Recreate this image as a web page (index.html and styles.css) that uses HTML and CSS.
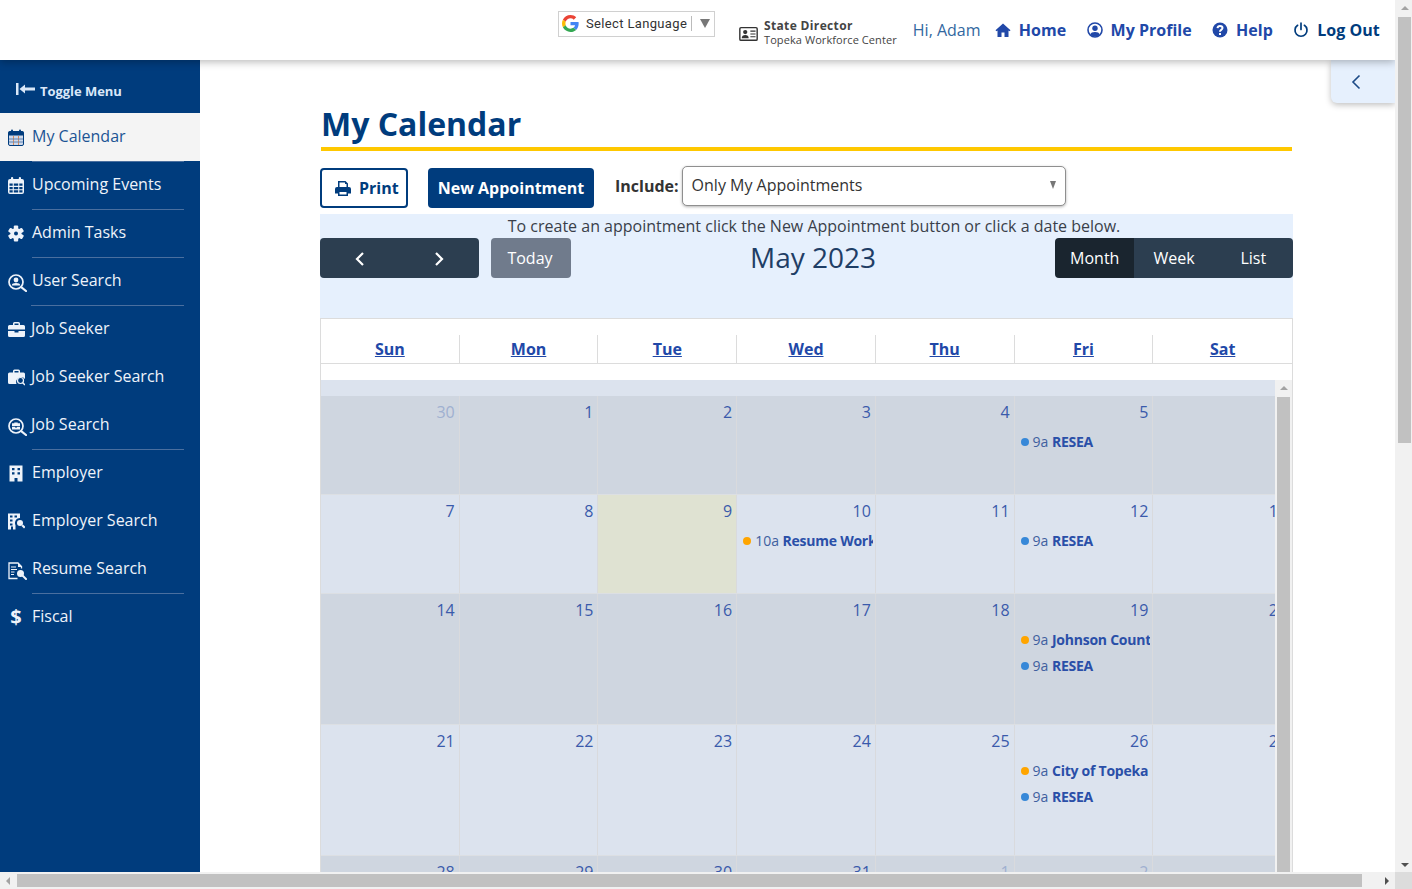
FILE: index.html
```html
<!DOCTYPE html>
<html lang="en">
<head>
<meta charset="utf-8">
<title>My Calendar</title>
<link rel="stylesheet" href="styles.css">
</head>
<body>
<div class="viewport">
  <div class="page">
    <header class="topbar">
      <div class="translate">
        <svg class="g-logo" viewBox="0 0 48 48" aria-hidden="true"><path fill="#EA4335" d="M24 9.500c3.500 0 6.700 1.200 9.200 3.600l6.900-6.900C35.900 2.400 30.500 0 24 0 14.600 0 6.500 5.400 2.600 13.200l8 6.200C12.500 13.700 17.800 9.500 24 9.500z"/><path fill="#4285F4" d="M47 24.500c0-1.600-.2-3.100-.4-4.500H24v9h12.900c-.6 3-2.300 5.500-4.800 7.200l7.700 6C44.300 38 47 31.800 47 24.500z"/><path fill="#FBBC05" d="M10.500 28.600c-.5-1.400-.8-3-.8-4.600s.3-3.200.8-4.600l-8-6.200C.9 16.500 0 20.100 0 24s.9 7.500 2.600 10.800l7.900-6.200z"/><path fill="#34A853" d="M24 48c6.500 0 11.900-2.100 15.900-5.800l-7.700-6c-2.200 1.400-4.900 2.300-8.200 2.300-6.200 0-11.500-4.200-13.400-9.900l-8 6.200C6.500 42.600 14.600 48 24 48z"/></svg>
        <span class="translate-label">Select Language</span>
        <span class="translate-caret"></span>
      </div>
      <div class="role">
        <svg class="role-icon" viewBox="0 0 20 16" aria-hidden="true"><path fill="#333" fill-rule="evenodd" d="M2 1h16a2 2 0 0 1 2 2v11a2 2 0 0 1-2 2H2a2 2 0 0 1-2-2V3a2 2 0 0 1 2-2zm0 1.500a.5.500 0 0 0-.5.500v11a.5.500 0 0 0 .5.500h16a.5.500 0 0 0 .5-.5V3a.5.500 0 0 0-.5-.5z"/><circle cx="6.500" cy="6.500" r="2.300" fill="#333"/><path fill="#333" d="M2.800 13c0-2.500 1.500-3.500 3.700-3.500s3.700 1 3.700 3.500z"/><path stroke="#333" stroke-width="1.200" d="M12 5.500h5.500M12 8.500h5.500M12 11.500h5.500"/></svg>
        <div class="role-text">
          <div class="role-title">State Director</div>
          <div class="role-place">Topeka Workforce Center</div>
        </div>
      </div>
      <nav class="top-nav">
        <span class="greet">Hi, Adam</span>
        <a class="top-link">
          <svg class="top-icon" viewBox="0 0 16 16" aria-hidden="true"><path fill="currentColor" d="M8 1.500 0.500 8.200l1 1.100L2.500 8.500V15h4v-4.500h3V15h4V8.500l1 .8 1-1.100z"/></svg>
          Home
        </a>
        <a class="top-link">
          <svg class="top-icon" viewBox="0 0 16 16" aria-hidden="true"><circle cx="8" cy="8" r="7" fill="none" stroke="currentColor" stroke-width="1.600"/><circle cx="8" cy="6.300" r="2.700" fill="currentColor"/><path fill="currentColor" d="M3.200 12.600C3.800 10.800 5.500 10 8 10s4.200.8 4.800 2.600C11.500 14 9.800 14.600 8 14.600s-3.500-.6-4.800-2z"/></svg>
          My Profile
        </a>
        <a class="top-link">
          <svg class="top-icon" viewBox="0 0 16 16" aria-hidden="true"><circle cx="8" cy="8" r="7.500" fill="currentColor"/><path fill="none" stroke="#fff" stroke-width="2" d="M5.500 6.200C5.700 4.800 6.700 4 8 4c1.400 0 2.500.9 2.500 2.100 0 1.800-2.500 1.700-2.500 3.400v.2"/><rect x="7" y="11" width="2" height="2" fill="#fff"/></svg>
          Help
        </a>
        <a class="top-link top-link-dark">
          <svg class="top-icon" viewBox="0 0 16 16" aria-hidden="true"><path fill="none" stroke="currentColor" stroke-width="1.700" stroke-linecap="round" d="M8 1.200v6.300M4.600 3.300a6 6 0 1 0 6.800 0"/></svg>
          Log Out
        </a>
      </nav>
    </header>

    <div class="shell">
      <aside class="sidebar">
        <div class="toggle">
          <svg class="toggle-icon" viewBox="0 0 19 12" aria-hidden="true"><path fill="currentColor" d="M0 0h2.500v12H0zM3.500 6 9 1.500v3h10v3H9v3z"/></svg>
          Toggle Menu
        </div>
        <a class="nav-item is-active">
          <svg class="nav-icon" viewBox="0 0 16 17" aria-hidden="true"><rect x="0.500" y="2.500" width="15" height="14" rx="1.500" fill="#cfd9ea" stroke="#003c7d"/><rect x="0.500" y="2.500" width="15" height="4" fill="#003c7d"/><path stroke="#d98b5a" d="M5.500 7v9M10.500 7v9"/><path stroke="#5f84b5" d="M1 10h14M1 13h14"/><rect x="3" y="0.500" width="2" height="4" rx="1" fill="#003c7d"/><rect x="11" y="0.500" width="2" height="4" rx="1" fill="#003c7d"/></svg>
          <span class="nav-label">My Calendar</span>
        </a>
        <a class="nav-item sep">
          <svg class="nav-icon" viewBox="0 0 16 17" aria-hidden="true"><path fill="currentColor" fill-rule="evenodd" d="M2 2h12a2 2 0 0 1 2 2v11a2 2 0 0 1-2 2H2a2 2 0 0 1-2-2V4a2 2 0 0 1 2-2zM1.500 6.500v2.300h3.200V6.500zm4.300 0v2.300h4.400V6.500zm5.500 0v2.300h3.200V6.500zm-9.800 3.400v2.300h3.200V9.900zm4.300 0v2.300h4.400V9.900zm5.500 0v2.300h3.200V9.900zM1.500 13.300v2.200h3.200v-2.200zm4.300 0v2.200h4.400v-2.200zm5.500 0v2.200h3.200v-2.200z"/><rect x="3" y="0" width="2.200" height="4" rx="1" fill="currentColor"/><rect x="10.800" y="0" width="2.200" height="4" rx="1" fill="currentColor"/></svg>
          <span class="nav-label">Upcoming Events</span>
        </a>
        <a class="nav-item sep">
          <svg class="nav-icon" viewBox="0 0 16 16" aria-hidden="true"><g fill="currentColor"><rect x="5.800" y="0" width="4.400" height="16" rx="1"/><rect x="5.800" y="0" width="4.400" height="16" rx="1" transform="rotate(60 8 8)"/><rect x="5.800" y="0" width="4.400" height="16" rx="1" transform="rotate(120 8 8)"/></g><circle cx="8" cy="8" r="5.500" fill="currentColor"/><circle cx="8" cy="8" r="2" fill="#003c7d"/></svg>
          <span class="nav-label">Admin Tasks</span>
        </a>
        <a class="nav-item sep">
          <svg class="nav-icon nav-icon-lg" viewBox="0 0 19 18" aria-hidden="true"><circle cx="8" cy="8" r="7" fill="none" stroke="currentColor" stroke-width="1.700"/><circle cx="8" cy="6" r="2.400" fill="currentColor"/><path fill="currentColor" d="M3.800 11.500c0-1.600 1.800-2.400 4.200-2.400s4.200.8 4.200 2.400z"/><path stroke="currentColor" stroke-width="2.200" stroke-linecap="round" d="M13.200 13.200 18 17"/></svg>
          <span class="nav-label">User Search</span>
        </a>
        <a class="nav-item sep">
          <svg class="nav-icon nav-icon-wide" viewBox="0 0 17 15" aria-hidden="true"><path fill="currentColor" d="M5 3V1.500A1.500 1.500 0 0 1 6.500 0h4A1.500 1.500 0 0 1 12 1.500V3h3.500A1.500 1.500 0 0 1 17 4.500V7.500H0V4.500A1.500 1.500 0 0 1 1.500 3zM6.500 3h4V1.500h-4zM0 9h6.500v1.500h4V9H17v4.500a1.500 1.500 0 0 1-1.500 1.500h-14A1.500 1.500 0 0 1 0 13.500z"/></svg>
          <span class="nav-label nav-label-tight">Job Seeker</span>
        </a>
        <a class="nav-item">
          <svg class="nav-icon nav-icon-wide" viewBox="0 0 17 16" aria-hidden="true"><path fill="currentColor" d="M5 3V1.500A1.500 1.500 0 0 1 6.500 0h4A1.500 1.500 0 0 1 12 1.500V3h3.500A1.500 1.500 0 0 1 17 4.500V9.500a5 5 0 0 0-8.500 5H1.500A1.500 1.500 0 0 1 0 13V4.500A1.500 1.500 0 0 1 1.500 3zM6.500 3h4V1.500h-4z"/><circle cx="12.500" cy="11" r="3" fill="none" stroke="currentColor" stroke-width="1.200"/><path stroke="currentColor" stroke-width="1.500" d="m14.700 13.200 2.300 2.300"/></svg>
          <span class="nav-label nav-label-tight">Job Seeker Search</span>
        </a>
        <a class="nav-item">
          <svg class="nav-icon nav-icon-lg" viewBox="0 0 19 18" aria-hidden="true"><circle cx="8" cy="8" r="7" fill="none" stroke="currentColor" stroke-width="1.700"/><path fill="currentColor" d="M6.300 5.300V4.500h3.400v.8h2.300v2.700H4V5.300zM4 8.800h3.300v.9h1.400v-.9H12v2.700H4z"/><path stroke="currentColor" stroke-width="2.200" stroke-linecap="round" d="M13.200 13.200 18 17"/></svg>
          <span class="nav-label nav-label-tight">Job Search</span>
        </a>
        <a class="nav-item sep">
          <svg class="nav-icon" viewBox="0 0 16 16" aria-hidden="true"><path fill="currentColor" fill-rule="evenodd" d="M1.500 0h13v16H9.500v-3.500h-3V16h-5zM4 2.500v2.200h2.500V2.500zm5.500 0v2.200H12V2.500zM4 6.700v2.200h2.500V6.700zm5.500 0v2.200H12V6.700z"/></svg>
          <span class="nav-label">Employer</span>
        </a>
        <a class="nav-item">
          <svg class="nav-icon nav-icon-wide" viewBox="0 0 17 16" aria-hidden="true"><path fill="currentColor" fill-rule="evenodd" d="M0 0h12v4.500a5 5 0 0 0-4.500 7.200V16H5v-3H3v3H0zM2 2v2h2.500V2zm4.500 0v2H9V2zM2 6v2h2.500V6zM2 10v2h2.500v-2z"/><circle cx="12" cy="9.500" r="3" fill="currentColor"/><path stroke="currentColor" stroke-width="2" d="m14.200 11.700 2.500 2.500"/></svg>
          <span class="nav-label">Employer Search</span>
        </a>
        <a class="nav-item">
          <svg class="nav-icon nav-icon-lg" viewBox="0 0 19 18" aria-hidden="true"><path fill="none" stroke="currentColor" stroke-width="1.300" d="M9.500 16.500H1V1h9l3.500 3.500v2"/><path fill="currentColor" d="M10 1v4h4z"/><path stroke="currentColor" d="M3 5h5M3 7.500h6M3 10h3.500M3 12.500h3"/><circle cx="12.500" cy="11.500" r="3.500" fill="currentColor"/><path stroke="currentColor" stroke-width="2" stroke-linecap="round" d="m15 14 3 3"/></svg>
          <span class="nav-label">Resume Search</span>
        </a>
        <a class="nav-item sep">
          <span class="nav-glyph">$</span>
          <span class="nav-label">Fiscal</span>
        </a>
      </aside>

      <main class="content">
        <h1 class="page-title">My Calendar</h1>
        <div class="actions">
          <button class="btn btn-outline">
            <svg class="print-icon" viewBox="0 0 16 15" aria-hidden="true"><path fill="currentColor" fill-rule="evenodd" d="M3 0h7.500L13 2.500V6h1a2 2 0 0 1 2 2v4.500h-3V15H3v-2.500H0V8a2 2 0 0 1 2-2h1zM4.500 1.500V6h7V3h-1.500V1.500zM4.500 11v2.500h7V11z"/></svg>
            Print
          </button>
          <button class="btn btn-solid">New Appointment</button>
          <label class="include-label">Include:</label>
          <div class="select">
            <span>Only My Appointments</span>
            <span class="select-caret"></span>
          </div>
        </div>

        <section class="fc-head">
          <p class="hint">To create an appointment click the New Appointment button or click a date below.</p>
          <div class="fc-toolbar">
            <div class="fc-left">
              <div class="btn-group">
                <button class="fc-btn fc-arrow"><svg class="chev" viewBox="0 0 10 16" aria-hidden="true"><path fill="none" stroke="currentColor" stroke-width="2.200" d="M8 2 2 8l6 6"/></svg></button>
                <button class="fc-btn fc-arrow"><svg class="chev" viewBox="0 0 10 16" aria-hidden="true"><path fill="none" stroke="currentColor" stroke-width="2.200" d="m2 2 6 6-6 6"/></svg></button>
              </div>
              <button class="fc-btn fc-today">Today</button>
            </div>
            <h2 class="fc-title">May 2023</h2>
            <div class="btn-group">
              <button class="fc-btn fc-view is-on">Month</button>
              <button class="fc-btn fc-view">Week</button>
              <button class="fc-btn fc-view">List</button>
            </div>
          </div>
        </section>

        <section class="cal">
          <div class="dow-row">
            <div class="dow"><a>Sun</a></div>
            <div class="dow"><a>Mon</a></div>
            <div class="dow"><a>Tue</a></div>
            <div class="dow"><a>Wed</a></div>
            <div class="dow"><a>Thu</a></div>
            <div class="dow"><a>Fri</a></div>
            <div class="dow"><a>Sat</a></div>
          </div>
          <div class="cal-gap"></div>
          <div class="cal-body">
            <div class="cal-scroll">
              <div class="cal-weeks">
                <div class="cal-band"></div>
                <div class="week week-short odd">
                  <div class="day"><span class="num dim">30</span></div>
                  <div class="day"><span class="num">1</span></div>
                  <div class="day"><span class="num">2</span></div>
                  <div class="day"><span class="num">3</span></div>
                  <div class="day"><span class="num">4</span></div>
                  <div class="day"><span class="num">5</span><div class="ev"><i class="dot dot-blue"></i>9a <b>RESEA</b></div></div>
                  <div class="day"><span class="num">6</span></div>
                </div>
                <div class="week week-short even">
                  <div class="day"><span class="num">7</span></div>
                  <div class="day"><span class="num">8</span></div>
                  <div class="day is-today"><span class="num">9</span></div>
                  <div class="day"><span class="num">10</span><div class="ev"><i class="dot dot-orange"></i>10a <b>Resume Workshop</b></div></div>
                  <div class="day"><span class="num">11</span></div>
                  <div class="day"><span class="num">12</span><div class="ev"><i class="dot dot-blue"></i>9a <b>RESEA</b></div></div>
                  <div class="day"><span class="num">13</span></div>
                </div>
                <div class="week week-tall odd">
                  <div class="day"><span class="num">14</span></div>
                  <div class="day"><span class="num">15</span></div>
                  <div class="day"><span class="num">16</span></div>
                  <div class="day"><span class="num">17</span></div>
                  <div class="day"><span class="num">18</span></div>
                  <div class="day"><span class="num">19</span><div class="ev"><i class="dot dot-orange"></i>9a <b>Johnson County</b></div><div class="ev"><i class="dot dot-blue"></i>9a <b>RESEA</b></div></div>
                  <div class="day"><span class="num">20</span></div>
                </div>
                <div class="week week-tall even">
                  <div class="day"><span class="num">21</span></div>
                  <div class="day"><span class="num">22</span></div>
                  <div class="day"><span class="num">23</span></div>
                  <div class="day"><span class="num">24</span></div>
                  <div class="day"><span class="num">25</span></div>
                  <div class="day"><span class="num">26</span><div class="ev"><i class="dot dot-orange"></i>9a <b>City of Topeka</b></div><div class="ev"><i class="dot dot-blue"></i>9a <b>RESEA</b></div></div>
                  <div class="day"><span class="num">27</span></div>
                </div>
                <div class="week week-short odd">
                  <div class="day"><span class="num">28</span></div>
                  <div class="day"><span class="num">29</span></div>
                  <div class="day"><span class="num">30</span></div>
                  <div class="day"><span class="num">31</span></div>
                  <div class="day"><span class="num dim">1</span></div>
                  <div class="day"><span class="num dim">2</span></div>
                  <div class="day"><span class="num dim">3</span></div>
                </div>
              </div>
            </div>
            <div class="inner-scrollbar">
              <span class="arrow arrow-up"></span>
              <span class="inner-thumb"></span>
            </div>
          </div>
        </section>
      </main>
    </div>

    <button class="side-tab" aria-label="Collapse"><svg class="tab-chev" viewBox="0 0 10 16" aria-hidden="true"><path fill="none" stroke="currentColor" stroke-width="1.600" d="M8.500 1.500 2 8l6.500 6.500"/></svg></button>
  </div>

  <div class="vbar">
    <span class="arrow arrow-up"></span>
    <span class="vthumb"></span>
    <span class="arrow arrow-down"></span>
  </div>
  <div class="hbar">
    <span class="arrow arrow-left"></span>
    <span class="hthumb"></span>
    <span class="arrow arrow-right"></span>
  </div>
  <div class="corner"></div>
</div>
</body>
</html>
```

FILE: styles.css
```css
* { box-sizing: border-box; }
html, body { margin: 0; height: 100%; overflow: hidden; }
body { font-family: "Open Sans", "Liberation Sans", sans-serif; font-size: 16px; color: #333; background: #fff; }
a { cursor: pointer; }
button { font-family: inherit; border: 0; cursor: pointer; }

.viewport { display: grid; grid-template-columns: 1395px 17px; grid-template-rows: 872px 17px; width: 1412px; height: 889px; }
.page { position: relative; display: flex; flex-direction: column; overflow: hidden; }

/* top bar */
.topbar { position: relative; z-index: 2; flex: 0 0 60px; display: flex; align-items: flex-start; background: #fff; box-shadow: 0 2px 8px rgba(0,0,0,.28); padding-left: 558px; }
.translate { display: flex; align-items: center; width: 157px; height: 26px; margin-top: 11px; padding: 0 0 1px 3px; border: 1px solid #d0d0d0; }
.g-logo { width: 17px; height: 17px; flex: none; }
.translate-label { margin-left: 7px; padding-right: 4px; border-right: 1px solid #bbb; font-family: Roboto, "Liberation Sans", sans-serif; font-size: 13px; line-height: 15px; color: #333; letter-spacing: .35px; }
.translate-caret { margin-left: 8px; width: 0; height: 0; border-left: 5px solid transparent; border-right: 5px solid transparent; border-top: 9px solid #777; }
.role { display: flex; align-items: center; margin-top: 19px; margin-left: 24px; }
.role-icon { width: 19px; height: 15px; margin-right: 6px; flex: none; }
.role-text { color: #444; }
.role-title { font-size: 12px; line-height: 14px; font-weight: 700; letter-spacing: .35px; }
.role-place { font-size: 11px; line-height: 14px; letter-spacing: .08px; }
.top-nav { display: flex; align-items: center; height: 60px; margin-left: 16px; }
.greet { color: #33689f; font-size: 16px; width: 82px; }
.top-link { display: flex; align-items: center; color: #2148a8; font-weight: 700; font-size: 16px; margin-right: 20.500px; }
.top-link-dark { color: #003c7d; margin-right: 0; }
.top-icon { width: 16px; height: 16px; margin-right: 8px; flex: none; }

/* sidebar */
.shell { flex: 1; min-height: 0; display: flex; }
.sidebar { flex: 0 0 200px; background: #003c7d; color: #eef3fa; }
.toggle { display: flex; align-items: center; height: 53px; padding: 8px 0 0 16px; font-size: 13px; font-weight: 700; letter-spacing: -.05px; color: #d9e7f8; }
.toggle-icon { width: 19px; height: 12px; margin-right: 5px; margin-top: -3px; }
.nav-item { display: flex; align-items: stretch; height: 48px; padding-left: 8px; color: #eef3fa; }
.nav-item.is-active { background: #f4f4f4; color: #1c5494; }
.nav-icon { width: 16px; height: 17px; flex: none; align-self: center; margin-right: 8px; }
.nav-icon-lg { width: 19px; height: 18px; margin: 4px 5px 0 0; }
.nav-icon-wide { width: 17px; margin-right: 7px; }
.nav-glyph { width: 16px; margin-right: 8px; align-self: center; text-align: center; font-weight: 700; font-size: 20px; line-height: 20px; }
.nav-label { flex: 1; margin-right: 16px; line-height: 44px; font-size: 16px; border-top: 1px solid transparent; }
.nav-label-tight { margin-left: -1px; }
.nav-item.sep .nav-label { border-top-color: #4a6f9f; }

/* main */
.content { flex: 1; min-width: 0; padding-left: 120px; }
.page-title { width: 971px; height: 50px; margin: 41px 0 0 1px; border-bottom: 4px solid #ffc800; color: #003c7d; font-size: 32px; line-height: 46px; font-weight: 700; }
.actions { display: flex; align-items: flex-start; width: 973px; height: 42px; margin: 15px 0 6px; }
.btn { display: flex; align-items: center; justify-content: center; height: 40px; margin-top: 2px; border-radius: 4px; font-size: 16px; font-weight: 700; }
.btn-outline { justify-content: flex-start; width: 88px; padding-left: 13px; border: 2px solid #003c7d; background: #fff; color: #003c7d; }
.print-icon { width: 16px; height: 15px; margin-right: 8px; flex: none; }
.btn-solid { width: 166px; margin-left: 20px; background: #003c7d; color: #fff; }
.include-label { margin: 9px 3px 0 21px; font-weight: 700; line-height: 22px; color: #333; }
.select { display: flex; align-items: center; justify-content: space-between; width: 384px; height: 40px; padding: 0 9px 2px 9px; background: #fff; border: 1px solid #8f8f8f; border-radius: 5px; box-shadow: 0 1px 3px rgba(0,0,0,.3); color: #333; }
.select-caret { width: 0; height: 0; border-left: 3.500px solid transparent; border-right: 3.500px solid transparent; border-top: 8px solid #777; }

.fc-head { width: 973px; height: 104px; background: #e6f0fd; }
.hint { margin: 0; padding-left: 15px; text-align: center; line-height: 24px; color: #3a3f4a; }
.fc-toolbar { display: flex; align-items: center; justify-content: space-between; height: 40px; }
.fc-left { display: flex; gap: 12px; }
.btn-group { display: flex; height: 40px; border-radius: 4px; overflow: hidden; }
.fc-btn { height: 40px; padding: 0; font-size: 16px; color: #fff; background: #2c3e50; }
.fc-arrow { display: flex; align-items: center; justify-content: center; width: 79.500px; padding-top: 2px; }
.chev { width: 10px; height: 16px; }
.fc-today { width: 80px; padding-right: 2px; border-radius: 4px; background: #707b8c; }
.fc-title { margin: 0 0 2px; color: #1f3e66; font-size: 28px; font-weight: 400; line-height: 38px; }
.fc-view { width: 79.300px; }
.fc-view.is-on { background: #1a252f; }

.cal { width: 973px; border-left: 1px solid #dcdcdc; border-right: 1px solid #dcdcdc; border-top: 1px solid #dcdcdc; }
.dow-row { display: grid; grid-template-columns: repeat(7, 1fr); padding-top: 16px; border-bottom: 1px solid #dcdcdc; }
.dow { height: 28px; line-height: 29px; text-align: center; font-weight: 700; border-right: 1px solid #dcdcdc; }
.dow:last-child { border-right: 0; }
.dow a { color: #2148a8; text-decoration: underline; }
.cal-gap { height: 16px; }
.cal-body { display: flex; }
.cal-scroll { width: 954px; flex: none; overflow: hidden; }
.cal-weeks { width: 971px; }
.cal-band { height: 16px; background: #dce3ee; }
.week { display: grid; grid-template-columns: repeat(7, 1fr); border-bottom: 1px solid #dcdfe3; }
.week-short { height: 99px; }
.week-tall { height: 131px; }
.odd { background: #cfd6e0; }
.even { background: #dce3ee; }
.day { min-width: 0; padding: 4px 4px 0 6px; border-right: 1px solid #d9dadd; }
.day.is-today { background: #dfe2d2; }
.num { display: block; height: 28px; text-align: right; line-height: 24px; color: #3a5aab; }
.num.dim { color: #9fb0d0; }
.ev { display: flex; align-items: center; height: 26px; margin-right: -2px; overflow: hidden; white-space: pre; font-size: 14px; color: #40609f; }
.ev b { color: #2a4fa8; letter-spacing: -.25px; }
.dot { flex: none; width: 8px; height: 8px; margin: 1px 4px 0 0; border-radius: 50%; }
.dot-blue { background: #3788d8; }
.dot-orange { background: #ffa500; }

.inner-scrollbar { display: flex; flex-direction: column; align-items: center; width: 17px; padding-top: 6px; background: #f1f1f1; }
.inner-thumb { width: 13px; height: 600px; margin-top: 7px; background: #c1c1c1; }

/* window scrollbars */
.vbar { display: flex; flex-direction: column; align-items: center; grid-column: 2; grid-row: 1; padding: 6px 0 5px 2px; background: #f1f1f1; }
.vthumb { width: 13px; height: 426px; margin: 7px 0 auto; background: #c1c1c1; }
.hbar { display: flex; align-items: center; grid-column: 1; grid-row: 2; padding: 0 6px; background: #f1f1f1; }
.hthumb { width: 1345px; height: 13px; margin: 0 auto 0 7px; background: #c1c1c1; }
.corner { grid-column: 2; grid-row: 2; background: #dcdcdc; }
.arrow { width: 0; height: 0; flex: none; }
.arrow-up { border-left: 4px solid transparent; border-right: 4px solid transparent; border-bottom: 4px solid #a3a3a3; }
.arrow-down { border-left: 4px solid transparent; border-right: 4px solid transparent; border-top: 4px solid #505050; }
.arrow-left { border-top: 4px solid transparent; border-bottom: 4px solid transparent; border-right: 4px solid #a3a3a3; }
.arrow-right { border-top: 4px solid transparent; border-bottom: 4px solid transparent; border-left: 4px solid #505050; }

.side-tab { position: absolute; top: 60px; right: 0; z-index: 1; display: flex; align-items: center; justify-content: center; width: 64px; height: 43px; padding: 0 14px 0 0; background: #e6f0fd; color: #1c4a86; border-bottom-left-radius: 6px; box-shadow: 0 2px 6px rgba(0,0,0,.25); }
.tab-chev { width: 10px; height: 16px; }
```
